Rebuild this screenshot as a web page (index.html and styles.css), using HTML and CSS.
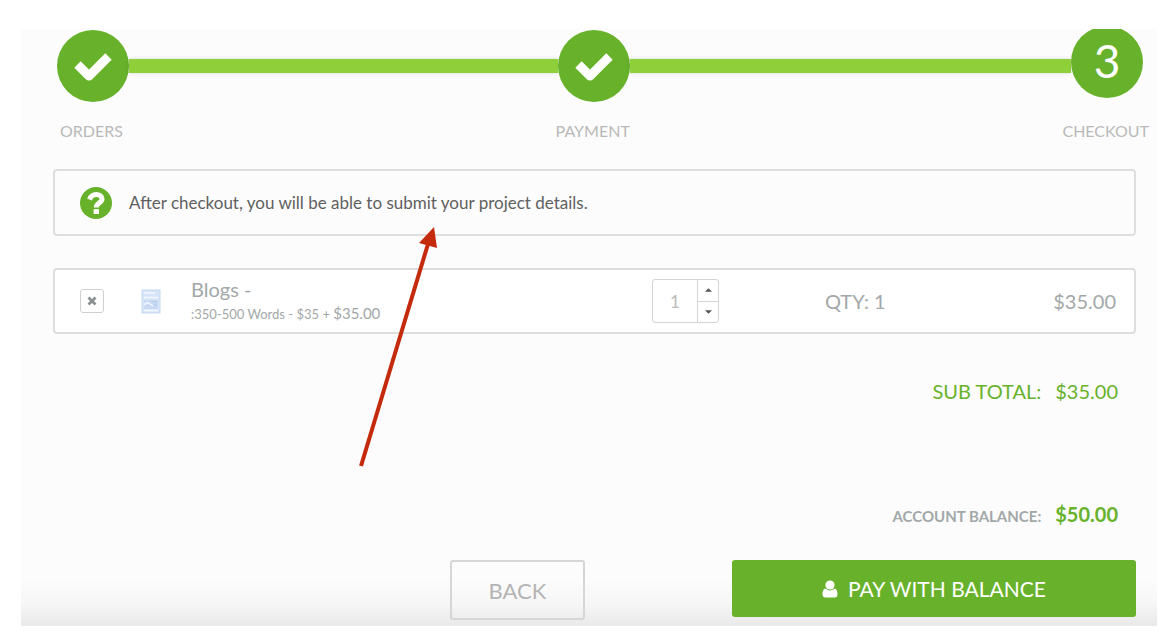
FILE: index.html
```html
<!DOCTYPE html>
<html lang="en">
<head>
    <meta charset="UTF-8">
    <meta name="viewport" content="width=device-width, initial-scale=1.0">
    <title>Checkout</title>
    <link rel="stylesheet" href="styles.css">
</head>
<body>
    <main class="panel">
        <!-- Progress -->
        <div class="track">
            <span class="circle">
                <svg class="check" viewBox="0 0 40 32" aria-hidden="true"><path d="M4.500 14.500L16 26L35.500 6.500" fill="none" stroke="#fff" stroke-width="9" stroke-linejoin="round"/></svg>
            </span>
            <span class="line line-first"></span>
            <span class="circle">
                <svg class="check" viewBox="0 0 40 32" aria-hidden="true"><path d="M4.500 14.500L16 26L35.500 6.500" fill="none" stroke="#fff" stroke-width="9" stroke-linejoin="round"/></svg>
            </span>
            <span class="line line-second"></span>
            <span class="circle current">3</span>
        </div>
        <div class="labels">
            <span>ORDERS</span>
            <span>PAYMENT</span>
            <span>CHECKOUT</span>
        </div>

        <div class="notice">
            <svg class="help" viewBox="0 0 32 32" aria-hidden="true">
                <circle cx="16" cy="16" r="16" fill="#67b22a"/>
                <path d="M9.500 12.500C11 8.500 13.500 7.500 16.300 7.500C20 7.500 22 9.500 22 12C22 16 16.300 15.500 16.300 20.500" fill="none" stroke="#fff" stroke-width="5"/>
                <rect x="13.600" y="22.200" width="5.400" height="4.800" fill="#fff"/>
            </svg>
            <p>After checkout, you will be able to submit your project details.</p>
        </div>

        <!-- Order item -->
        <div class="item">
            <button class="remove" type="button" aria-label="Remove">
                <svg viewBox="0 0 10 10" aria-hidden="true"><path d="M1.500 1.500L8.500 8.500M8.500 1.500L1.500 8.500" stroke="#8b9191" stroke-width="2.800"/></svg>
            </button>
            <svg class="thumb" viewBox="0 0 20 25" aria-hidden="true">
                <rect x="1" y="1" width="18" height="23" fill="#d7e5f8" stroke="#c6d9f2"/>
                <path d="M3 4h11M3 8.500h14M3 21.500h14" stroke="#f3f8ff" stroke-width="1.500"/>
                <rect x="3" y="11" width="14" height="9" fill="#c8daf2"/>
                <path d="M3 16q3-4 6-1l3 2" fill="none" stroke="#f3f8ff" stroke-width="1.500"/>
                <path d="M11 13h5M13 16h3" stroke="#b3cbec"/>
            </svg>
            <div class="details">
                <h2>Blogs -</h2>
                <p>:350-500 Words - $35 + <span>$35.00</span></p>
            </div>
            <div class="spinner">
                <input type="text" value="1" aria-label="Quantity">
                <div class="arrows">
                    <button type="button" aria-label="Increase"><svg viewBox="0 0 8 4" aria-hidden="true"><path d="M4 0L8 4H0z" fill="#555"/></svg></button>
                    <button type="button" aria-label="Decrease"><svg viewBox="0 0 8 4" aria-hidden="true"><path d="M0 0H8L4 4z" fill="#555"/></svg></button>
                </div>
            </div>
            <span class="qty">QTY: 1</span>
            <span class="price">$35.00</span>
        </div>

        <!-- Totals -->
        <div class="total subtotal">
            <span>SUB TOTAL:</span>
            <span class="amount">$35.00</span>
        </div>
        <div class="total balance">
            <span>ACCOUNT BALANCE:</span>
            <span class="amount">$50.00</span>
        </div>

        <div class="actions">
            <button class="back" type="button">BACK</button>
            <button class="pay" type="button">
                <svg viewBox="0 0 16 18" aria-hidden="true"><circle cx="8" cy="5" r="4.600" fill="#fff"/><path d="M3.500 8.500C1 9 0.500 12 0.500 14.500Q0.500 17.500 3.500 17.500H12.500Q15.500 17.500 15.500 14.500C15.500 12 15 9 12.500 8.500Q8 12.500 3.500 8.500z" fill="#fff"/></svg>
                PAY WITH BALANCE
            </button>
        </div>
    </main>

    <!-- Pointer to the notice -->
    <svg class="pointer" viewBox="0 0 80 242" aria-hidden="true">
        <path d="M2 240L69 18" stroke="#c42a0c" stroke-width="4"/>
        <path d="M75 1L60 17L78 22z" fill="#c42a0c"/>
    </svg>
</body>
</html>
```
FILE: styles.css
```css
* {
    box-sizing: border-box;
}

body {
    margin: 0;
    padding: 29px 1px 5px 21px;
    background: #fff;
    font-family: Lato, 'Liberation Sans', sans-serif;
    color: #a2a8a8;
}

h2,
p {
    margin: 0;
    font-weight: 400;
}

button,
input {
    font-family: inherit;
    color: inherit;
    padding: 0;
}

button {
    cursor: pointer;
}

.panel {
    padding: 1px 21px 6px 32px;
    background: linear-gradient(to top, #e9e9e9, #f6f6f6 22px, #fcfcfc 48px);
    overflow: hidden;
}

/* Progress */
.track {
    display: flex;
    align-items: center;
    margin: 0 -7px 0 4px;
}

.circle {
    flex: none;
    display: flex;
    align-items: center;
    justify-content: center;
    width: 72px;
    height: 72px;
    border-radius: 50%;
    background: #67b22a;
    color: #fff;
    font-size: 46px;
}

.current {
    margin-top: -8px;
    padding-bottom: 4px;
}

.check {
    width: 40px;
    height: 32px;
}

.line {
    height: 14px;
    background: #8fd03a;
    box-shadow: 0 0 4px rgba(0, 0, 0, 0.15);
}

.line-first {
    flex: 36;
}

.line-second {
    flex: 37;
}

.labels {
    display: flex;
    justify-content: space-between;
    margin: 19px -13px 28px 7px;
    font-size: 16px;
    line-height: 20px;
    color: #b9b9b9;
}

/* Boxes */
.notice,
.item {
    border: 2px solid #dedede;
    border-radius: 4px;
    align-items: center;
}

.notice {
    display: flex;
    gap: 17px;
    height: 67px;
    padding: 0 25px;
    margin-bottom: 32px;
    font-size: 17px;
    color: #606060;
}

.help {
    width: 32px;
    height: 32px;
}

.item {
    display: grid;
    grid-template-columns: 61px 50px 461fr 173fr 88fr 203fr;
    height: 66px;
    padding: 0 18px 0 25px;
    margin-bottom: 45px;
    background: #fff;
}

.remove {
    display: flex;
    align-items: center;
    justify-content: center;
    width: 24px;
    height: 24px;
    border: 1px solid #d0d0d0;
    border-radius: 3px;
    background: #fff;
}

.remove svg {
    width: 10px;
    height: 10px;
}

.thumb {
    width: 20px;
    height: 25px;
}

.details h2 {
    font-size: 20px;
    line-height: 24px;
}

.details p {
    font-size: 13px;
    line-height: 24px;
}

.details span {
    font-size: 15px;
}

.spinner {
    display: flex;
    width: 67px;
    height: 44px;
    border: 1px solid #d4d4d4;
    border-radius: 3px;
}

.spinner input {
    width: 44px;
    border: 0;
    background: none;
    font-size: 17px;
    text-align: center;
    color: #bbb;
}

.arrows {
    flex: 1;
    display: flex;
    flex-direction: column;
    border-left: 1px solid #d4d4d4;
}

.arrows button {
    flex: 1;
    display: flex;
    align-items: center;
    justify-content: center;
    border: 0;
    background: none;
}

.arrows button + button {
    border-top: 1px solid #d4d4d4;
}

.arrows svg {
    width: 7px;
    height: 4px;
}

.qty,
.price {
    font-size: 20px;
}

.price {
    text-align: right;
}

/* Totals */
.total {
    display: flex;
    justify-content: flex-end;
    align-items: baseline;
    gap: 14px;
    padding-right: 18px;
    line-height: 24px;
}

.subtotal {
    font-size: 20px;
    color: #67b22a;
    margin-bottom: 99px;
}

.balance {
    font-size: 15px;
    font-weight: 700;
    margin-bottom: 32px;
}

.balance .amount {
    font-size: 20px;
    color: #67b22a;
}

/* Buttons */
.actions {
    display: flex;
    justify-content: flex-end;
    align-items: flex-start;
    gap: 147px;
}

.back {
    width: 135px;
    height: 60px;
    border: 2px solid #d6d6d6;
    border-radius: 3px;
    background: none;
    font-size: 22px;
    color: #b4b4b4;
}

.pay {
    display: flex;
    align-items: center;
    justify-content: center;
    gap: 10px;
    width: 404px;
    height: 57px;
    border: 0;
    border-radius: 3px;
    background: #67b22a;
    font-size: 21px;
    color: #fff;
}

.pay svg {
    width: 16px;
    height: 18px;
}

/* Red arrow drawn over the page */
.pointer {
    position: absolute;
    left: 359px;
    top: 226px;
    width: 80px;
    height: 242px;
}
```
